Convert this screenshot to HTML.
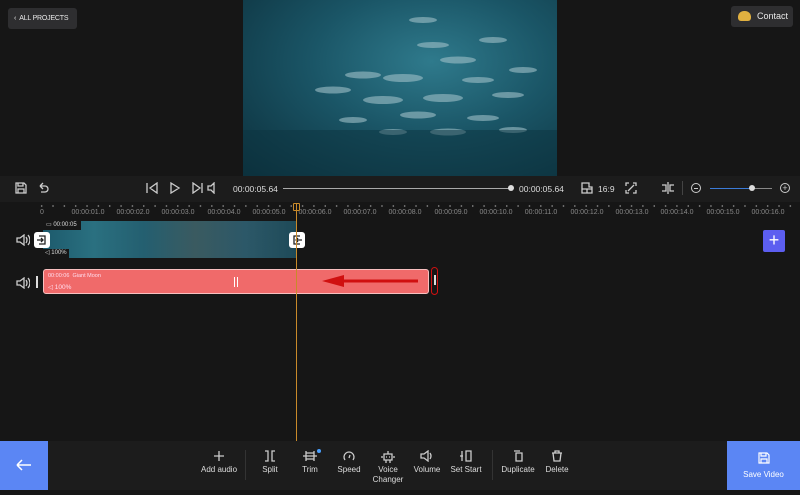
<!DOCTYPE html><html><head><style>
*{margin:0;padding:0;box-sizing:border-box}
body{width:800px;height:490px;background:#161616;font-family:"Liberation Sans",sans-serif;color:#ddd;position:relative;overflow:hidden}
.a{position:absolute}
.btn{background:#2e2e30;border-radius:3px;color:#e8e8e8;font-size:8px;white-space:nowrap}
.rl{position:absolute;top:209px;font-size:7px;color:#888;transform:translateX(-50%);white-space:nowrap}
.tl{position:absolute;top:465px;font-size:8px;color:#ddd;transform:translateX(-50%);text-align:center;line-height:10px;white-space:nowrap}
.ic{position:absolute;top:450px;transform:translateX(-50%)}
svg.i{fill:none;stroke:#ccc;stroke-width:1.3}
</style></head><body>
<div class="a btn" style="left:8px;top:8px;width:69px;height:21px;line-height:21px;padding-left:6px;font-size:7px;letter-spacing:-0.2px">&#8249;&nbsp; ALL PROJECTS</div>
<div class="a btn" style="left:731px;top:6px;width:62px;height:21px;line-height:21px;font-size:9px;padding-left:26px"><span style="position:absolute;left:7px;top:5px;width:13px;height:10px;background:#e0b040;border-radius:6px 6px 3px 3px"></span>Contact</div>
<div class="a" style="left:243px;top:0;width:314px;height:176px;background:radial-gradient(ellipse at 60% 35%,#2f7a8c 0%,#1a5566 45%,#0c2e3a 100%);overflow:hidden">
<svg width="314" height="176" style="position:absolute;left:0;top:0"><g fill="#9fc0c8" opacity=".6">
<ellipse cx="190" cy="45" rx="16" ry="3"/><ellipse cx="215" cy="60" rx="18" ry="3.5"/><ellipse cx="120" cy="75" rx="18" ry="3.5"/><ellipse cx="160" cy="78" rx="20" ry="4"/><ellipse cx="235" cy="80" rx="16" ry="3"/><ellipse cx="90" cy="90" rx="18" ry="3.5"/><ellipse cx="140" cy="100" rx="20" ry="4"/><ellipse cx="200" cy="98" rx="20" ry="4"/><ellipse cx="265" cy="95" rx="16" ry="3"/><ellipse cx="175" cy="115" rx="18" ry="3.5"/><ellipse cx="240" cy="118" rx="16" ry="3"/><ellipse cx="280" cy="70" rx="14" ry="3"/><ellipse cx="110" cy="120" rx="14" ry="3"/><ellipse cx="205" cy="132" rx="18" ry="3.5"/><ellipse cx="150" cy="132" rx="14" ry="3"/><ellipse cx="270" cy="130" rx="14" ry="3"/><ellipse cx="180" cy="20" rx="14" ry="3"/><ellipse cx="250" cy="40" rx="14" ry="3"/></g>
<rect x="0" y="130" width="314" height="46" fill="#0c3440" opacity=".5"/></svg></div>
<div class="a" style="left:0;top:176px;width:800px;height:26px;background:#1c1c1c"></div>
<svg class="a i" style="left:15px;top:182px" width="12" height="12"><path d="M1 1h8l2 2v8H1z M3 1v3h5V1 M3 11V7h6v4"/></svg>
<svg class="a i" style="left:37px;top:182px" width="12" height="12"><path d="M3 4h5a3 3 0 010 6H4 M3 4l3-3 M3 4l3 3"/></svg>
<svg class="a i" style="left:146px;top:182px" width="70" height="12"><path d="M1 1v10 M11 1L4 6l7 5z M25 1l8 5-8 5z M47 1l7 5-7 5z M56 1v10 M62 4h3l3-3v10l-3-3h-3z"/></svg>
<div class="a" style="left:233px;top:184px;font-size:8.5px;color:#ddd">00:00:05.64</div>
<div class="a" style="left:283px;top:188px;width:228px;height:1px;background:#aaa"></div>
<div class="a" style="left:508px;top:185px;width:6px;height:6px;border-radius:3px;background:#ddd"></div>
<div class="a" style="left:519px;top:184px;font-size:8.5px;color:#ddd">00:00:05.64</div>
<svg class="a i" style="left:581px;top:182px" width="12" height="12"><path d="M1 1h7v4h3v6H1z M1 7h10 M6 7v4"/></svg>
<div class="a" style="left:598px;top:184px;font-size:8.5px;color:#ddd">16:9</div>
<svg class="a i" style="left:625px;top:182px" width="12" height="12"><path d="M1 4V1h3 M8 1h3v3 M11 8v3H8 M4 11H1V8 M3 9l6-6"/></svg>
<svg class="a i" style="left:661px;top:182px" width="14" height="12"><path d="M1 3h4v6H1 M13 3H9v6h4 M7 0v12"/></svg>
<div class="a" style="left:682px;top:181px;width:1px;height:14px;background:#444"></div>
<div class="a" style="left:691px;top:183px;width:10px;height:10px;border:1px solid #ccc;border-radius:5px"><div style="position:absolute;left:2px;top:3.5px;width:4px;height:1px;background:#ccc"></div></div>
<div class="a" style="left:710px;top:188px;width:62px;height:1px;background:#888"></div>
<div class="a" style="left:710px;top:188px;width:42px;height:1px;background:#3b7bd8"></div>
<div class="a" style="left:749px;top:185px;width:6px;height:6px;border-radius:3px;background:#ddd"></div>
<div class="a" style="left:780px;top:183px;width:10px;height:10px;border:1px solid #ccc;border-radius:5px;font-size:9px;line-height:8px;text-align:center;color:#ccc">+</div>
<div class="a" style="left:36px;top:205px;width:764px;height:2px;background-image:radial-gradient(circle,#777 0.8px,transparent 1px);background-size:11.35px 2px;background-position:0 0"></div>
<div class="rl" style="left:42px">0</div>
<div class="rl" style="left:88px">00:00:01.0</div><div class="rl" style="left:133px">00:00:02.0</div><div class="rl" style="left:178px">00:00:03.0</div><div class="rl" style="left:224px">00:00:04.0</div><div class="rl" style="left:269px">00:00:05.0</div><div class="rl" style="left:315px">00:00:06.0</div><div class="rl" style="left:360px">00:00:07.0</div><div class="rl" style="left:405px">00:00:08.0</div><div class="rl" style="left:451px">00:00:09.0</div><div class="rl" style="left:496px">00:00:10.0</div><div class="rl" style="left:541px">00:00:11.0</div><div class="rl" style="left:587px">00:00:12.0</div><div class="rl" style="left:632px">00:00:13.0</div><div class="rl" style="left:677px">00:00:14.0</div><div class="rl" style="left:723px">00:00:15.0</div><div class="rl" style="left:768px">00:00:16.0</div>
<svg class="a i" style="left:16px;top:234px" width="14" height="12"><path d="M1 4h3l4-3v10L4 8H1z M10 3q2 3 0 6 M12 1q4 5 0 10"/></svg>
<div class="a" style="left:43px;top:221px;width:253px;height:37px;background:linear-gradient(90deg,#1d5a6c,#2a7080 20%,#245f70 40%,#3a5a60 60%,#2c5868 80%,#1e4a58)"></div>
<div class="a" style="left:43px;top:221px;width:38px;height:9px;background:#161616;font-size:6px;color:#ddd;padding-left:3px;line-height:9px;white-space:nowrap">▭ 00:00:05</div>
<div class="a" style="left:43px;top:249px;width:26px;height:9px;background:#161616;font-size:6px;color:#ddd;padding-left:2px;line-height:9px;white-space:nowrap">◁ 100%</div>
<div class="a" style="left:34px;top:232px;width:16px;height:16px;background:#fff;border-radius:3px"><svg width="16" height="16" fill="none" stroke="#222" stroke-width="1.3"><path d="M5 4h6v8H5 M3 8h6 M7 6l2 2-2 2"/></svg></div>
<div class="a" style="left:289px;top:232px;width:16px;height:16px;background:#fff;border-radius:3px"><svg width="16" height="16" fill="none" stroke="#222" stroke-width="1.3"><path d="M11 4H5v8h6 M13 8H7 M9 6L7 8l2 2"/></svg></div>
<div class="a" style="left:763px;top:230px;width:22px;height:22px;background:#5c5ef0;border-radius:2px;color:#fff;font-size:18px;text-align:center;line-height:21px">+</div>
<svg class="a i" style="left:16px;top:277px" width="14" height="12"><path d="M1 4h3l4-3v10L4 8H1z M10 3q2 3 0 6 M12 1q4 5 0 10"/></svg>
<div class="a" style="left:36px;top:276px;width:2px;height:12px;background:#ddd"></div>
<div class="a" style="left:43px;top:269px;width:386px;height:25px;background:#f06a6a;border:1.5px solid #f8c0c0;border-radius:3px"></div>
<div class="a" style="left:48px;top:273px;font-size:5.5px;color:#fde;white-space:nowrap">00:00:06&nbsp; Giant Moon</div>
<div class="a" style="left:48px;top:283px;font-size:6.5px;color:#fde;white-space:nowrap">◁ 100%</div>
<div class="a" style="left:234px;top:277px;width:4px;height:10px;border-left:1px solid #fff;border-right:1px solid #fff"></div>
<svg class="a" style="left:320px;top:274px" width="100" height="14"><path d="M98 7H20" stroke="#d01010" stroke-width="3"/><path d="M2 7L24 1V13Z" fill="#d01010"/></svg>
<div class="a" style="left:431px;top:267px;width:7px;height:28px;border:1.5px solid #d01010;border-radius:4px"></div>
<div class="a" style="left:434px;top:275px;width:1.5px;height:10px;background:#ddd"></div>
<div class="a" style="left:296px;top:203px;width:1px;height:238px;background:#c98a2a"></div>
<div class="a" style="left:293px;top:203px;width:7px;height:8px;border:1px solid #c98a2a;border-radius:1px"></div>
<div class="a" style="left:0;top:441px;width:800px;height:49px;background:#1c1c1c"></div>
<div class="a" style="left:0;top:441px;width:48px;height:49px;background:#5b86f4"><svg width="48" height="49" fill="none" stroke="#fff" stroke-width="1.5"><path d="M17 24h14 M17 24l5-5 M17 24l5 5"/></svg></div>
<div class="a" style="left:727px;top:441px;width:73px;height:49px;background:#5b86f4;color:#fff;font-size:8px;text-align:center"><svg width="12" height="12" style="margin-top:11px" fill="none" stroke="#fff" stroke-width="1.2"><path d="M1 1h8l2 2v8H1z M3 1v3h5V1 M3 11V7h6v4"/></svg><div style="margin-top:4px">Save Video</div></div>
<div class="a" style="left:245px;top:450px;width:1px;height:30px;background:#333"></div>
<div class="a" style="left:492px;top:450px;width:1px;height:30px;background:#333"></div>
<svg class="ic i" style="left:219px" width="12" height="12"><path d="M6 1v10 M1 6h10"/></svg><div class="tl" style="left:219px">Add audio</div>
<svg class="ic i" style="left:270px" width="14" height="12"><path d="M2 1h3v10H2 M12 1H9v10h3"/></svg><div class="tl" style="left:270px">Split</div>
<svg class="ic i" style="left:310px" width="16" height="12"><path d="M1 6h14 M4 3h8v6H4z M4 1v10 M12 1v10"/></svg><div class="tl" style="left:310px">Trim</div>
<div class="a" style="left:317px;top:449px;width:4px;height:4px;border-radius:2px;background:#4aa0ff"></div>
<svg class="ic i" style="left:349px" width="12" height="12"><path d="M2 10A5 5 0 1110 10 M6 8l1-3"/></svg><div class="tl" style="left:349px">Speed</div>
<svg class="ic i" style="left:388px" width="14" height="14"><path d="M3 4h8v6H3z M7 1v3 M5 7h1 M8 7h1 M1 6v2 M13 6v2 M5 10v3 M9 10v3"/></svg><div class="tl" style="left:388px">Voice<br>Changer</div>
<svg class="ic i" style="left:427px" width="14" height="12"><path d="M1 4h3l4-3v10L4 8H1z M10 3q2 3 0 6"/></svg><div class="tl" style="left:427px">Volume</div>
<svg class="ic i" style="left:466px" width="14" height="12"><path d="M3 1v10 M1 6h3 M7 1h5v10H7z"/></svg><div class="tl" style="left:466px">Set Start</div>
<svg class="ic i" style="left:518px" width="12" height="12"><path d="M4 3h6v8H4z M2 1h6"/></svg><div class="tl" style="left:518px">Duplicate</div>
<svg class="ic i" style="left:557px" width="12" height="12"><path d="M1 3h10 M4 3V1h4v2 M2 3l1 8h6l1-8"/></svg><div class="tl" style="left:557px">Delete</div>
</body></html>
